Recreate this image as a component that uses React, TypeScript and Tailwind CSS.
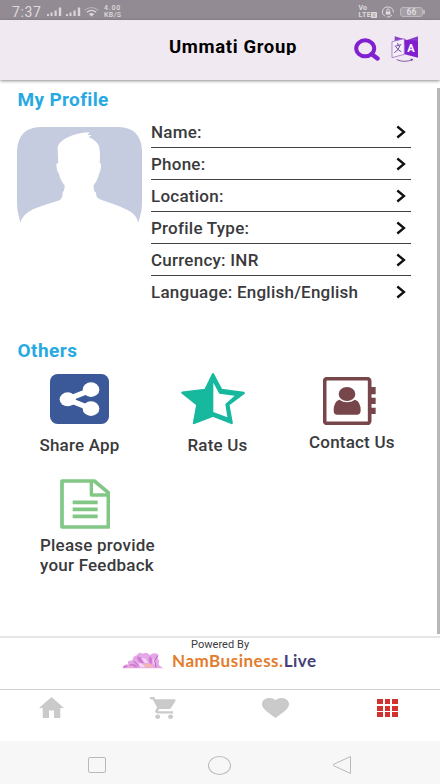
import React from "react";

const profileRows = [
  "Name:",
  "Phone:",
  "Location:",
  "Profile Type:",
  "Currency: INR",
  "Language: English/English",
];

function SignalIcon() {
  return (
    <svg className="w-[15px] h-[9px]" viewBox="0 0 15 9" fill="#d9d5da">
      <rect x="0" y="7" width="2" height="2" />
      <rect x="3.5" y="5.5" width="2" height="3.5" />
      <rect x="7.5" y="3.5" width="2.2" height="5.5" />
      <rect x="11.8" y="0.5" width="2.4" height="8.5" />
    </svg>
  );
}

function StatusBar() {
  return (
    <div className="h-5 bg-[#928b93] flex items-center pl-[12px] pr-[15px] text-[#dedade] font-['Roboto',sans-serif]">
      <span className="text-[14px] leading-none w-[35px] tracking-[0.6px] pt-[4px]">7:37</span>
      <div className="flex gap-[4px] pt-[3px]">
        <SignalIcon />
        <SignalIcon />
      </div>
      <svg className="w-[15px] h-[10px] ml-[3px] mt-[3px]" viewBox="0 0 15 10" fill="none" stroke="#d9d5da">
        <path d="M0.5 3.2Q7.5 -2 14.5 3.2" strokeWidth="1" opacity="0.6" />
        <path d="M2.8 5.2Q7.5 1.6 12.2 5.2" strokeWidth="1.4" />
        <path d="M4.8 7Q7.5 5 10.2 7L7.5 9.6Z" fill="#d9d5da" stroke="none" />
      </svg>
      <div className="ml-[5px] mt-[4px] text-[7px] leading-[7px] font-medium">
        <p className="tracking-[0.8px]">4.00</p>
        <p className="tracking-[0.4px]">KB/S</p>
      </div>
      <div className="ml-auto mt-[3px] text-[7px] leading-[7px] font-bold">
        <p>Vo</p>
        <div className="flex items-center">
          <p className="tracking-[0.4px]">LTE</p>
          <svg className="w-[6px] h-[6px]" viewBox="0 0 6 6">
            <rect width="6" height="6" rx="1" fill="#dedade" />
            <path d="M1.5 2H4.5M1.5 4H4.5" stroke="#928b93" strokeWidth="0.8" />
          </svg>
        </div>
      </div>
      <svg className="w-[14px] h-[12px] ml-[4px] mt-[3px]" viewBox="0 0 14 12" fill="none" stroke="#dedade">
        <path d="M4 10.3A5.5 5 0 1 1 12.3 6.5" />
        <path d="M6 11A5.5 5 0 0 0 11 9" />
        <rect x="4.8" y="5.4" width="4.6" height="3.2" fill="#dedade" stroke="none" />
        <path d="M5.7 5.5V4.4a1.4 1.4 0 0 1 2.8 0v1.1" />
      </svg>
      <div className="ml-[5px] mt-[3px] w-[23px] h-[10px] rounded-[3px] border border-[#bdb8be] bg-[#a49fa5] text-[8.5px] leading-[8px] text-center font-bold">
        66
      </div>
      <div className="w-[2px] h-[4px] mt-[3px] bg-[#bdb8be]" />
    </div>
  );
}

function TranslateIcon() {
  return (
    <svg className="w-[28px] h-[27px]" viewBox="0 0 84 81">
      <path d="M11 4L46 14V30L11 18Z" fill="#8a3ccb" />
      <path d="M81 4L46 16V30L81 20Z" fill="#8a3ccb" />
      <path d="M3 20L40 11V58L3 68Z" fill="#f6effa" stroke="#a071c4" strokeWidth="2.5" />
      <path d="M41 14L81 17V68L41 58Z" fill="#811fd0" />
      <path d="M11 34L31 29M19 24L23 31M27 31Q23 47 10 53M15 36Q23 48 31 50" fill="none" stroke="#72529a" strokeWidth="3" />
      <text x="49" y="52" fontSize="33" fontWeight="700" fill="#fff" fontFamily="Roboto, sans-serif">
        A
      </text>
      <path d="M17 74Q41 84 64 74" fill="none" stroke="#70419c" strokeWidth="2.5" />
      <path d="M58 71L67 72L62 79Z" fill="#70419c" />
    </svg>
  );
}

function Header() {
  return (
    <div className="h-[60px] bg-[#f0e9f2] shadow-[0_1px_3px_rgba(0,0,0,0.45)] relative flex items-start">
      <h1 className="ml-[169px] mt-[14px] text-[18.5px] leading-[26px] [clip-path:inset(0_0_5px_0)] font-bold text-black tracking-[0.65px] whitespace-nowrap">
        Ummati Group
      </h1>
      <svg className="absolute left-[354px] top-[18px] w-[26px] h-[24px]" viewBox="0 0 26 24" fill="none" stroke="#8120d0">
        <ellipse cx="11.2" cy="10.3" rx="9" ry="8" strokeWidth="4" />
        <path d="M17.5 16L23.5 20.5" strokeWidth="4.4" strokeLinecap="round" />
      </svg>
      <div className="absolute left-[391px] top-[15px]">
        <TranslateIcon />
      </div>
    </div>
  );
}

function Avatar() {
  return (
    <svg className="w-[125px] h-[96px] mt-[11px] shrink-0" viewBox="52 125 375 288" preserveAspectRatio="none">
      <path
        fill="#c6cce0"
        d="M62 412L54 378Q52 368 52 350V195Q56 127 122 125H357Q424 127 427 195V350Q427 368 425 378L416 412Q411 392 394 380Q372 366 330 352Q294 341 291 335L289 322Q281 318 282 300Q297 278 298 265Q304 258 304 236L300 232Q303 188 295 177Q285 162 266 155L277 150L264 149L270 141Q228 143 200 158Q174 171 174 190L176 232L170 236Q171 260 178 265Q182 285 195 300Q195 316 189 321Q190 337 180 345Q130 360 100 372Q68 388 62 412Z"
      />
    </svg>
  );
}

function ProfileSection() {
  return (
    <section>
      <h2 className="ml-[17.5px] pt-[7px] h-[36px] text-[19px] leading-[26px] font-bold tracking-[0.35px] text-[#27a9e1]">
        My Profile
      </h2>
      <div className="flex pl-[17px]">
        <Avatar />
        <ul className="ml-[9px] w-[260px]">
          {profileRows.map((row) => (
            <li
              key={row}
              className="h-8 flex items-center justify-between border-b border-[#414042] last:border-transparent pr-[5px] text-[17px] font-medium tracking-[0.24px]"
            >
              <span className="pt-[2px]">{row}</span>
              <svg className="w-[10px] h-[14px]" viewBox="0 0 10 14" fill="none" stroke="#111" strokeWidth="2.3">
                <path d="M1.3 1.5L8 7L1.3 12.5" />
              </svg>
            </li>
          ))}
        </ul>
      </div>
    </section>
  );
}

function ShareIcon() {
  return (
    <svg className="w-[59px] h-[50px]" viewBox="151 28 177 150" preserveAspectRatio="none">
      <rect x="151" y="28" width="177" height="150" rx="23" fill="#3b5998" />
      <path d="M274 76L203 104L274 132" fill="none" stroke="#fff" strokeWidth="16" />
      <ellipse cx="204" cy="104" rx="24" ry="21" fill="#fff" />
      <ellipse cx="274" cy="75" rx="25" ry="22" fill="#fff" />
      <ellipse cx="274" cy="132" rx="25" ry="22" fill="#fff" />
    </svg>
  );
}

function StarIcon() {
  return (
    <svg className="w-[65px] h-[53px]" viewBox="94 17 195 159" preserveAspectRatio="none">
      <path
        d="M190 24L215 71L282 80L236 115L246 170L190 148L133 170L143 115L98 79L167 71Z"
        fill="#16b89e"
        stroke="#16b89e"
        strokeWidth="7"
        strokeLinejoin="round"
      />
      <path d="M191 49L209 82L255 88L227 113L233 153L191 137Z" fill="#fff" />
    </svg>
  );
}

function ContactIcon() {
  return (
    <svg className="w-[53px] h-[48px]" viewBox="99 39 159 144" preserveAspectRatio="none" fill="#76464a">
      <rect x="104" y="44" width="135" height="134" rx="7" fill="none" stroke="#76464a" strokeWidth="11" />
      <path d="M242 69H257V91H242ZM242 101H257V120H242ZM242 131H257V150H242Z" />
      <ellipse cx="171" cy="90" rx="25" ry="21" />
      <path d="M148 107Q171 122 195 107Q212 112 212 140Q211 152 201 152H142Q131 152 131 140Q131 112 148 107Z" />
    </svg>
  );
}

function FeedbackIcon() {
  return (
    <svg
      className="w-[50px] h-[50px]"
      viewBox="180 41 150 150"
      fill="none"
      stroke="#82c785"
      strokeWidth="11"
      strokeLinejoin="round"
    >
      <path d="M186 47H283L325 82V185H186Z" />
      <path d="M274 48V89H323" strokeWidth="10" />
      <path d="M218 111H293M218 132H293M218 153H293" />
    </svg>
  );
}

function OthersSection() {
  return (
    <section className="pt-[30px]">
      <h2 className="ml-[17.5px] h-[34px] text-[19px] leading-[26px] font-bold tracking-[0.45px] text-[#27a9e1]">Others</h2>
      <div className="flex items-start text-[17px] leading-5 font-medium tracking-[0.2px] whitespace-nowrap">
        <div className="ml-[39.5px] w-[80px] flex flex-col items-center pt-[2px]">
          <ShareIcon />
          <p className="mt-[11px]">Share App</p>
        </div>
        <div className="ml-[61.5px] w-[65px] flex flex-col items-center">
          <StarIcon />
          <p className="mt-[10px] ml-[8px]">Rate Us</p>
        </div>
        <div className="ml-[63px] w-[86px] flex flex-col pt-[5px]">
          <div className="ml-[14px]">
            <ContactIcon />
          </div>
          <p className="mt-[7px]">Contact Us</p>
        </div>
      </div>
      <div className="ml-[40px] mt-[24px] text-[17px] leading-5 font-medium tracking-[0.22px]">
        <div className="ml-[20px]">
          <FeedbackIcon />
        </div>
        <p className="mt-[6px]">
          Please provide
          <br />
          your Feedback
        </p>
      </div>
    </section>
  );
}

function LotusLogo() {
  return (
    <svg className="w-[42px] h-[17px]" viewBox="0 0 126 51" preserveAspectRatio="none">
      <path d="M2 48Q6 34 20 38Q12 24 32 26Q30 14 44 10Q50 -2 62 5Q76 -2 84 10Q92 0 108 6Q104 18 112 26Q108 38 114 42L124 49H4Z" fill="#e5a8e6" />
      <path d="M44 14Q62 12 66 34Q48 34 44 14ZM84 12Q96 22 88 38Q74 28 84 12ZM20 38Q38 30 48 46H28Z" fill="#d07bd8" />
      <path d="M58 18Q74 16 78 34Q64 34 58 18ZM50 34Q62 32 70 46H52ZM92 20Q104 24 100 40Q90 34 92 20Z" fill="#f7d4f3" />
      <path d="M64 38L84 34L96 46H70ZM24 40L36 43L28 48Z" fill="#f3b4b0" />
      <path d="M108 10L98 26L102 46M34 26L52 44M4 46L16 42" fill="none" stroke="#b65cc6" strokeWidth="3" />
    </svg>
  );
}

function PoweredBy() {
  return (
    <div className="h-[54px] border-t-2 border-[#e6e6e8] border-b border-b-[#d2d2d2] bg-white">
      <p className="ml-[191px] text-[11px] leading-[14px] tracking-[0.05px]">Powered By</p>
      <div className="flex items-start ml-[122px]">
        <LotusLogo />
        <p className="ml-[8px] font-['Lato',sans-serif] text-[17px] leading-[17px] font-bold tracking-[0.5px] text-[#e37c2c]">
          NamBusiness.<span className="text-[#454078]">Live</span>
        </p>
      </div>
    </div>
  );
}

function BottomTabs() {
  return (
    <div className="h-[51px] flex items-start pt-[7px] pl-[38.5px] bg-white">
      <svg className="w-[25px] h-[21px]" viewBox="2 3 20 17" preserveAspectRatio="none" fill="#cacaca">
        <path d="M10 20v-6h4v6h5v-8h3L12 3 2 12h3v8z" />
      </svg>
      <svg className="w-[27px] h-[22px] ml-[86px]" viewBox="1 2 21 20" preserveAspectRatio="none" fill="#cacaca">
        <path d="M7 18c-1.1 0-1.99.9-1.99 2S5.9 22 7 22s2-.9 2-2-.9-2-2-2zM1 2v2h2l3.6 7.59-1.35 2.45c-.16.28-.25.61-.25.96 0 1.1.9 2 2 2h12v-2H7.42c-.14 0-.25-.11-.25-.25l.03-.12.9-1.63h7.45c.75 0 1.41-.41 1.75-1.03l3.58-6.49A1.003 1.003 0 0 0 20 4H5.21l-.94-2H1zm16 16c-1.1 0-1.99.9-1.99 2s.89 2 1.99 2 2-.9 2-2-.9-2-2-2z" />
      </svg>
      <svg className="w-[27px] h-[20px] ml-[85.5px] mt-[1px]" viewBox="2 3 20 18.35" preserveAspectRatio="none" fill="#cacaca">
        <path d="M12 21.35l-1.45-1.32C5.4 15.36 2 12.28 2 8.5 2 5.42 4.42 3 7.5 3c1.74 0 3.41.81 4.5 2.09C13.09 3.81 14.76 3 16.5 3 19.58 3 22 5.42 22 8.5c0 3.78-3.4 6.86-8.55 11.54L12 21.35z" />
      </svg>
      <div className="ml-[88px] mt-[2px] grid grid-cols-3 gap-x-[2px] gap-y-[1.5px]">
        {[0, 1, 2, 3, 4, 5, 6, 7, 8].map((n) => (
          <span key={n} className="w-[5.7px] h-[5px] bg-[#d0332f]" />
        ))}
      </div>
    </div>
  );
}

function SystemNav() {
  return (
    <div className="h-[43px] bg-[#f7f7f7] flex items-center pt-[5px] pl-[88px]">
      <div className="w-[18px] h-[16px] rounded-[2px] border border-[#b9b9b9]" />
      <div className="ml-[102px] w-[23px] h-[19px] rounded-[50%] border border-[#b9b9b9]" />
      <svg className="ml-[101px] w-[20px] h-[20px]" viewBox="0 0 20 20" fill="none" stroke="#b9b9b9">
        <path d="M18.5 1.5V18.5L1.5 10.6Q0.6 10 1.5 9.4Z" strokeLinejoin="round" />
      </svg>
    </div>
  );
}

function App() {
  return (
    <div className="w-[440px] h-[784px] overflow-hidden bg-white flex flex-col font-['Roboto',sans-serif] text-[#3a3a3c]">
      <StatusBar />
      <Header />
      <main className="h-[556px] relative">
        <ProfileSection />
        <OthersSection />
        <div className="absolute right-0 top-[8px] w-[3px] h-[546px] bg-[#b8b8b8]" />
      </main>
      <PoweredBy />
      <BottomTabs />
      <SystemNav />
    </div>
  );
}

export default App;
